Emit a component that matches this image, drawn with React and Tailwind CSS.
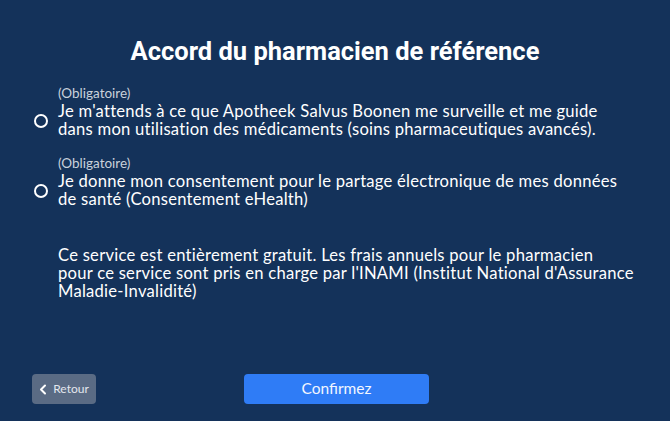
export default function App() {
  const Radio = () => (
    <span className="mt-[1px] block h-[14px] w-[14px] shrink-0 rounded-full border-2 border-white" />
  )

  return (
    <div className="flex h-[421px] w-[670px] flex-col bg-[#14325a] text-white" style={{ fontFamily: 'Lato, "Noto Sans", sans-serif' }}>
      <h1 className="pt-[36px] text-center text-[25.5px] font-bold leading-[30px]" style={{ fontFamily: 'Roboto, sans-serif' }}>
        Accord du pharmacien de référence
      </h1>

      <div className="mt-[19px] flex flex-col pl-[34px] pr-[20px]">
        <div className="flex flex-col">
          <p className="pl-[24px] text-[13.5px] leading-[17px] text-[#c9d1dc]">(Obligatoire)</p>
          <div className="flex items-center gap-[10px]">
            <Radio />
            <p className="text-[16.6px] leading-[18px] tracking-[0.25px]">
              Je m'attends à ce que Apotheek Salvus Boonen me surveille et me guide
              <br />
              dans mon utilisation des médicaments (soins pharmaceutiques avancés).
            </p>
          </div>
        </div>

        <div className="mt-[17px] flex flex-col">
          <p className="pl-[24px] text-[13.5px] leading-[17px] text-[#c9d1dc]">(Obligatoire)</p>
          <div className="flex items-center gap-[10px]">
            <Radio />
            <p className="text-[16.6px] leading-[18px] tracking-[0.25px]">
              Je donne mon consentement pour le partage électronique de mes données
              <br />
              de santé (Consentement eHealth)
            </p>
          </div>
        </div>

        <p className="mt-[38px] pl-[24px] text-[16.6px] leading-[18px] tracking-[0.25px]">
          Ce service est entièrement gratuit. Les frais annuels pour le pharmacien
          <br />
          pour ce service sont pris en charge par l'INAMI (Institut National d'Assurance
          <br />
          Maladie-Invalidité)
        </p>
      </div>

      <div className="mt-auto mb-[17px] flex items-center px-[32px]">
        <button className="flex h-[30px] w-[64px] items-center justify-center gap-[6px] rounded-[4px] bg-[#5a6b84] text-[12px] text-[#e3e7ee]">
          <svg width="8" height="11" viewBox="0 0 8 11" fill="none">
            <path d="M6 1.5L2 5.5L6 9.5" stroke="white" strokeWidth="2" strokeLinecap="round" strokeLinejoin="round" />
          </svg>
          Retour
        </button>
        <button className="ml-[148px] flex h-[30px] w-[185px] items-center justify-center rounded-[4px] bg-[#2f7cf6] text-[15.5px] text-[#f2f6ff]">
          Confirmez
        </button>
      </div>
    </div>
  )
}
